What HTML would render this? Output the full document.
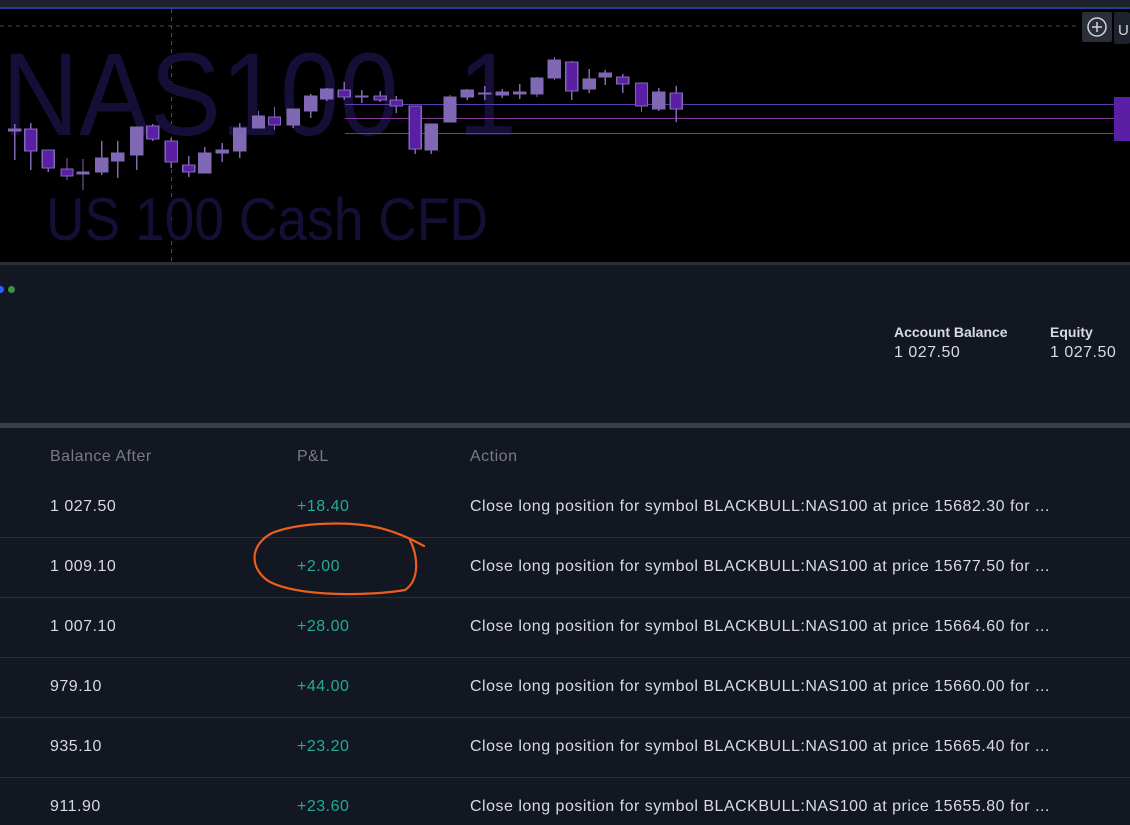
<!DOCTYPE html>
<html><head><meta charset="utf-8"><style>
*{margin:0;padding:0;box-sizing:border-box}
body{width:1130px;height:825px;overflow:hidden;background:#131722;font-family:"Liberation Sans",sans-serif;position:relative}
.abs{position:absolute}
.t{color:#d8dbe2;font-size:16px;white-space:nowrap}
.g{color:#22ab94;font-size:16px}
.h{color:#787b86;font-size:16px}
.a{letter-spacing:0.5px}
.sep{position:absolute;left:0;width:1130px;height:1px;background:#2a2e39}
</style></head><body>
<div class="abs" style="left:0;top:0;width:1130px;height:8px;background:#1e222d"></div>
<div class="abs" style="left:0;top:7px;width:1130px;height:2px;background:#1f3e8f"></div>
<div class="abs" style="left:0;top:9px;width:1130px;height:254px;background:#000"></div>
<svg class="abs" style="left:0;top:0" width="1130" height="265">
<line x1="0" y1="26" x2="1080" y2="26" stroke="#4a4d57" stroke-dasharray="4 4"/>
<line x1="171.5" y1="9" x2="171.5" y2="262" stroke="#4a4d57" stroke-dasharray="4 4"/>
<text x="2" y="135" font-family="Liberation Sans" font-size="118" fill="#150e36" textLength="515" lengthAdjust="spacingAndGlyphs">NAS100, 1</text>
<text x="46" y="240" font-family="Liberation Sans" font-size="60" fill="#150e36" textLength="442" lengthAdjust="spacingAndGlyphs">US 100 Cash CFD</text>
<line x1="345" y1="104.5" x2="1114" y2="104.5" stroke="#5a3fb0"/>
<line x1="345" y1="118.5" x2="1114" y2="118.5" stroke="#8a3aa0"/>
<line x1="345" y1="133.5" x2="1114" y2="133.5" stroke="#5a3fb0"/>
<rect x="1114" y="97" width="16" height="44" fill="#5b1fa6"/>
<rect x="1082" y="12" width="30" height="30" rx="2" fill="#2a2e39"/>
<circle cx="1097" cy="27" r="9" fill="none" stroke="#d1d4dc" stroke-width="1.5"/>
<path d="M1097 22v10M1092 27h10" stroke="#d1d4dc" stroke-width="1.5"/>
<rect x="1114" y="12" width="16" height="32" rx="2" fill="#1e222d"/>
<text x="1118" y="35" font-size="15" fill="#d1d4dc" font-family="Liberation Sans">U</text>
</svg>
<svg class="abs" style="left:0;top:0" width="700" height="270" viewBox="0 0 522.7 270" preserveAspectRatio="none">
<g stroke-width="1" shape-rendering="crispEdges">
<g stroke="#8068b4" fill="#8068b4">
<line x1="11" y1="124" x2="11" y2="160"/><rect x="6.5" y="129" width="9" height="2"/>
<line x1="62" y1="159" x2="62" y2="190"/><rect x="57.5" y="172" width="9" height="2"/>
<line x1="76" y1="141" x2="76" y2="175"/><rect x="71.5" y="158" width="9" height="14"/>
<line x1="88" y1="141" x2="88" y2="178"/><rect x="83.5" y="153" width="9" height="8"/>
<line x1="102" y1="127" x2="102" y2="170"/><rect x="97.5" y="127" width="9" height="28"/>
<line x1="153" y1="147" x2="153" y2="173"/><rect x="148.5" y="153" width="9" height="20"/>
<line x1="166" y1="143" x2="166" y2="162"/><rect x="161.5" y="150" width="9" height="3"/>
<line x1="179" y1="123" x2="179" y2="158"/><rect x="174.5" y="128" width="9" height="23"/>
<line x1="193" y1="111" x2="193" y2="128"/><rect x="188.5" y="116" width="9" height="12"/>
<line x1="219" y1="109" x2="219" y2="128"/><rect x="214.5" y="109" width="9" height="16"/>
<line x1="232" y1="94" x2="232" y2="118"/><rect x="227.5" y="96" width="9" height="15"/>
<line x1="244" y1="88" x2="244" y2="101"/><rect x="239.5" y="89" width="9" height="10"/>
<line x1="270" y1="90" x2="270" y2="103"/><rect x="265.5" y="96" width="9" height="1"/>
<line x1="322" y1="124" x2="322" y2="154"/><rect x="317.5" y="124" width="9" height="26"/>
<line x1="336" y1="95" x2="336" y2="122"/><rect x="331.5" y="97" width="9" height="25"/>
<line x1="349" y1="89" x2="349" y2="100"/><rect x="344.5" y="90" width="9" height="7"/>
<line x1="362" y1="86" x2="362" y2="100"/><rect x="357.5" y="93" width="9" height="1"/>
<line x1="375" y1="89" x2="375" y2="98"/><rect x="370.5" y="92" width="9" height="3"/>
<line x1="388" y1="84" x2="388" y2="99"/><rect x="383.5" y="92" width="9" height="2"/>
<line x1="401" y1="77" x2="401" y2="97"/><rect x="396.5" y="78" width="9" height="16"/>
<line x1="414" y1="57" x2="414" y2="80"/><rect x="409.5" y="60" width="9" height="18"/>
<line x1="440" y1="69" x2="440" y2="93"/><rect x="435.5" y="79" width="9" height="10"/>
<line x1="452" y1="70" x2="452" y2="85"/><rect x="447.5" y="73" width="9" height="4"/>
<line x1="492" y1="88" x2="492" y2="111"/><rect x="487.5" y="92" width="9" height="17"/>
</g>
<g stroke="#8068b4" fill="#5b1fa6">
<line x1="23" y1="123" x2="23" y2="170"/><rect x="18.5" y="129" width="9" height="22"/>
<line x1="36" y1="150" x2="36" y2="172"/><rect x="31.5" y="150" width="9" height="18"/>
<line x1="50" y1="158" x2="50" y2="180"/><rect x="45.5" y="169" width="9" height="7"/>
<line x1="114" y1="124" x2="114" y2="141"/><rect x="109.5" y="126" width="9" height="13"/>
<line x1="128" y1="138" x2="128" y2="168"/><rect x="123.5" y="141" width="9" height="21"/>
<line x1="141" y1="156" x2="141" y2="177"/><rect x="136.5" y="165" width="9" height="7"/>
<line x1="205" y1="107" x2="205" y2="130"/><rect x="200.5" y="117" width="9" height="8"/>
<line x1="257" y1="82" x2="257" y2="100"/><rect x="252.5" y="90" width="9" height="7"/>
<line x1="284" y1="91" x2="284" y2="102"/><rect x="279.5" y="96" width="9" height="4"/>
<line x1="296" y1="96" x2="296" y2="113"/><rect x="291.5" y="100" width="9" height="6"/>
<line x1="310" y1="106" x2="310" y2="154"/><rect x="305.5" y="106" width="9" height="43"/>
<line x1="427" y1="61" x2="427" y2="100"/><rect x="422.5" y="62" width="9" height="29"/>
<line x1="465" y1="74" x2="465" y2="93"/><rect x="460.5" y="77" width="9" height="7"/>
<line x1="479" y1="83" x2="479" y2="112"/><rect x="474.5" y="83" width="9" height="23"/>
<line x1="505" y1="86" x2="505" y2="122"/><rect x="500.5" y="93" width="9" height="16"/>
</g></g></svg>
<div class="abs" style="left:0;top:262px;width:1130px;height:3px;background:#2a2e39"></div>
<div class="abs" style="left:-3px;top:286px;width:7px;height:7px;border-radius:50%;background:#2962ff"></div>
<div class="abs" style="left:8px;top:286px;width:7px;height:7px;border-radius:50%;background:#4caf50;opacity:.8"></div>
<div class="abs t" style="left:894px;top:324px;font-weight:bold;font-size:14px">Account Balance</div>
<div class="abs t a" style="left:894px;top:344px;font-size:16px">1 027.50</div>
<div class="abs t" style="left:1050px;top:324px;font-weight:bold;font-size:14px">Equity</div>
<div class="abs t a" style="left:1050px;top:344px;font-size:16px">1 027.50</div>
<div class="abs" style="left:0;top:423px;width:1130px;height:5px;background:#3a3e48"></div>
<div class="abs h a" style="left:50px;top:448px">Balance After</div>
<div class="abs h a" style="left:297px;top:448px">P&amp;L</div>
<div class="abs h a" style="left:470px;top:448px">Action</div>
<div class="sep" style="top:537px"></div><div class="sep" style="top:597px"></div><div class="sep" style="top:657px"></div><div class="sep" style="top:717px"></div><div class="sep" style="top:777px"></div>
<div class="abs t a" style="left:50px;top:498px">1 027.50</div><div class="abs g a" style="left:297px;top:498px">+18.40</div><div class="abs t a" style="left:470px;top:498px">Close long position for symbol BLACKBULL:NAS100 at price 15682.30 for ...</div>
<div class="abs t a" style="left:50px;top:558px">1 009.10</div><div class="abs g a" style="left:297px;top:558px">+2.00</div><div class="abs t a" style="left:470px;top:558px">Close long position for symbol BLACKBULL:NAS100 at price 15677.50 for ...</div>
<div class="abs t a" style="left:50px;top:618px">1 007.10</div><div class="abs g a" style="left:297px;top:618px">+28.00</div><div class="abs t a" style="left:470px;top:618px">Close long position for symbol BLACKBULL:NAS100 at price 15664.60 for ...</div>
<div class="abs t a" style="left:50px;top:678px">979.10</div><div class="abs g a" style="left:297px;top:678px">+44.00</div><div class="abs t a" style="left:470px;top:678px">Close long position for symbol BLACKBULL:NAS100 at price 15660.00 for ...</div>
<div class="abs t a" style="left:50px;top:738px">935.10</div><div class="abs g a" style="left:297px;top:738px">+23.20</div><div class="abs t a" style="left:470px;top:738px">Close long position for symbol BLACKBULL:NAS100 at price 15665.40 for ...</div>
<div class="abs t a" style="left:50px;top:798px">911.90</div><div class="abs g a" style="left:297px;top:798px">+23.60</div><div class="abs t a" style="left:470px;top:798px">Close long position for symbol BLACKBULL:NAS100 at price 15655.80 for ...</div>
<svg class="abs" style="left:0;top:0" width="1130" height="825">
<path d="M424,546 C415,541 400,533 380,528 C350,521 300,522 272,533 C248,546 250,570 270,582 C300,597 370,596 405,590 C420,580 418,556 410,540" fill="none" stroke="#e8601c" stroke-width="2.2" stroke-linecap="round"/>
</svg>
</body></html>
